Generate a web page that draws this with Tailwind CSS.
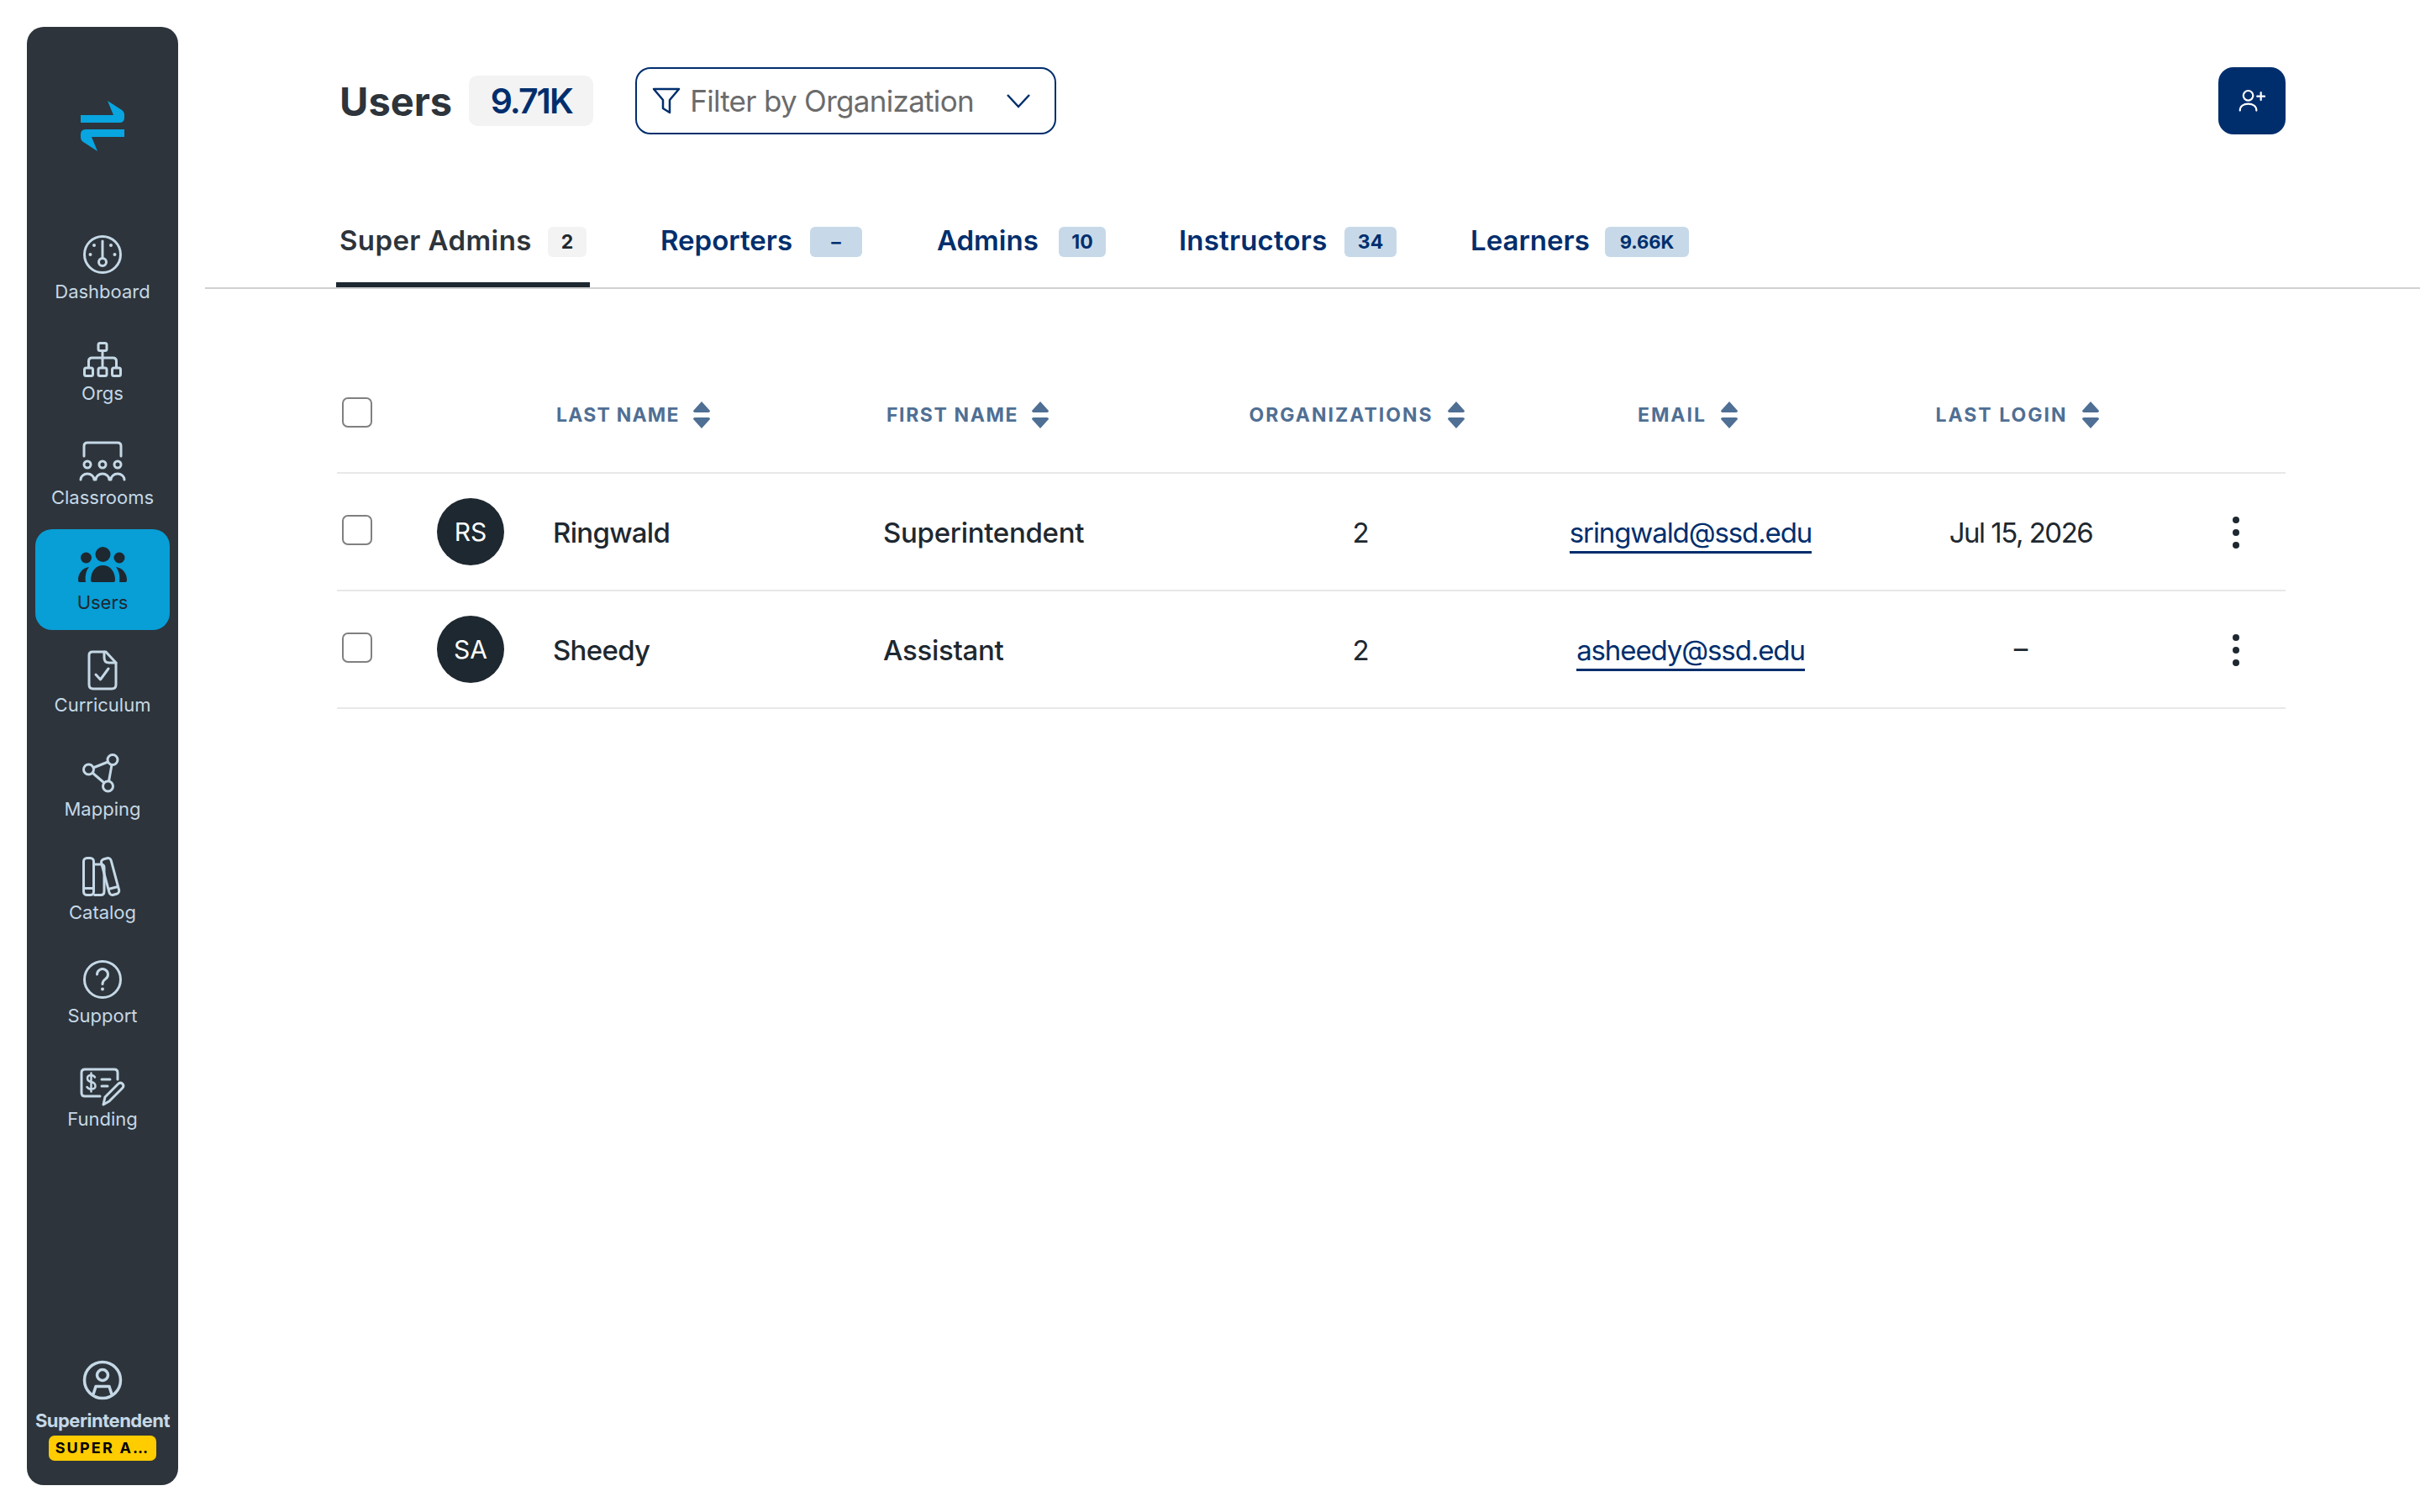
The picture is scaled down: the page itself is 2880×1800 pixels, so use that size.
<!DOCTYPE html>
<html lang="en">
<head>
  <meta charset="UTF-8" />
  <title>Users</title>
  <script src="https://cdn.jsdelivr.net/npm/@tailwindcss/browser@4"></script>
</head>
<body class="bg-white font-['Inter',sans-serif] text-[#1e2830]">
<div class="flex w-[2880px] h-[1800px] overflow-hidden">

  <!-- Sidebar -->
  <aside class="flex flex-col items-center shrink-0 w-[180px] h-[1736px] mt-[32px] ml-[32px] rounded-[20px] bg-[#2d343b] text-[#c5d8e6] text-[22px]">
    <svg class="mt-[88px] mb-[80px]" width="52" height="60" viewBox="0 0 52 60" fill="#08a5e0">
      <path d="M0 17H39L32 0L49 11Q52 13 52 17V20Q52 26 46 26H0Z" />
      <path d="M52 43H13L20 60L3 49Q0 47 0 43V40Q0 34 6 34H52Z" />
    </svg>

    <nav class="flex flex-col gap-[3.4px] w-[160px]">
      <a class="flex flex-col items-center h-[120px] pt-[20px]">
        <svg width="46" height="46" viewBox="0 0 46 46" fill="none" stroke="currentColor" stroke-width="3">
          <circle cx="23" cy="23" r="21.5" />
          <path d="M23 7V27" stroke-linecap="round" />
          <circle cx="23" cy="32" r="4.5" />
          <g fill="currentColor" stroke="none"><circle cx="13" cy="12" r="2" /><circle cx="33" cy="12" r="2" /><circle cx="8.500" cy="23" r="2" /><circle cx="37.500" cy="23" r="2" /></g>
        </svg>
        <span class="mt-[6px] leading-[30px]">Dashboard</span>
      </a>
      <a class="flex flex-col items-center h-[120px] pt-[24px]">
        <svg class="mb-[1px]" width="46" height="42" viewBox="0 0 46 42" fill="none" stroke="currentColor" stroke-width="3" stroke-linejoin="round">
          <rect x="18" y="1.500" width="10" height="9" rx="2" />
          <rect x="1.500" y="31" width="10" height="9.500" rx="2" />
          <rect x="18" y="31" width="10" height="9.500" rx="2" />
          <rect x="34.500" y="31" width="10" height="9.500" rx="2" />
          <path d="M23 10.500V31M6.500 31V23Q6.500 19 10.500 19H35.500Q39.500 19 39.500 23V31" />
        </svg>
        <span class="mt-[3px] leading-[30px]">Orgs</span>
      </a>
      <a class="flex flex-col items-center h-[120px] pt-[18px]">
        <svg width="58" height="48" viewBox="0 0 58 48" fill="none" stroke="currentColor" stroke-width="3" stroke-linecap="round">
          <path d="M7 18V6Q7 2 11 2H47Q51 2 51 6V18" />
          <circle cx="11" cy="28" r="4" /><circle cx="29" cy="28" r="4" /><circle cx="47" cy="28" r="4" />
          <path d="M3 46A8 7 0 0 1 19 46M21 46A8 7 0 0 1 37 46M39 46A8 7 0 0 1 55 46" />
        </svg>
        <span class="mt-[4px] leading-[30px]">Classrooms</span>
      </a>
      <a class="flex flex-col items-center h-[120px] pt-[21px] rounded-[20px] bg-[#089ed6] text-[#1e2830]">
        <svg width="58" height="42" viewBox="0 0 58 42" fill="currentColor">
          <circle cx="29.500" cy="9" r="9" /><circle cx="9.500" cy="13" r="6.500" /><circle cx="49" cy="13" r="6.500" />
          <path d="M15 40C15 29 21 22 29.500 22C38 22 44 29 44 40Q44 42 41 42H18Q15 42 15 40Z" />
          <path d="M1 42Q0 42 0 39C0 32 5 25 13 24C9 29 8 36 9 42Z" />
          <path d="M57 42Q58 42 58 39C58 32 53 25 45 24C49 29 50 36 49 42Z" />
        </svg>
        <span class="mt-[9px] leading-[30px]">Users</span>
      </a>
      <a class="flex flex-col items-center h-[120px] pt-[20px]">
        <svg width="36" height="48" viewBox="0 0 36 48" fill="none" stroke="currentColor" stroke-width="3" stroke-linejoin="round" stroke-linecap="round">
          <path d="M6 2H22L34 15V41Q34 46 29 46H7Q2 46 2 41V6Q2 2 6 2Z" />
          <path d="M20 2V9Q20 15 26 15H34" />
          <path d="M10 29L15.500 35L25 22" />
        </svg>
        <span class="mt-[2px] leading-[30px]">Curriculum</span>
      </a>
      <a class="flex flex-col items-center h-[120px] pt-[19px]">
        <svg class="mr-[2px]" width="48" height="48" viewBox="0 0 48 48" fill="none" stroke="currentColor" stroke-width="3">
          <circle cx="8.500" cy="20" r="6" /><circle cx="37" cy="8.500" r="6" /><circle cx="31.500" cy="40" r="6" />
          <path d="M14 18L31.500 11M13 24L27 36M36 14.500L32.500 34" />
        </svg>
        <span class="mt-[4px] leading-[30px]">Mapping</span>
      </a>
      <a class="flex flex-col items-center h-[120px] pt-[20px]">
        <svg width="48" height="48" viewBox="0 0 48 48" fill="none" stroke="currentColor" stroke-width="3" stroke-linejoin="round">
          <rect x="1.500" y="1.500" width="12" height="44" rx="4" />
          <path d="M13.500 9H22Q26 9 26 13V41Q26 45.500 22 45.500H13.500M1.500 37.500H13.500" />
          <g transform="rotate(-15 33 23)"><rect x="27" y="1.500" width="12" height="44" rx="4" /><path d="M27 37.500H39" /></g>
        </svg>
        <span class="mt-[3px] leading-[30px]">Catalog</span>
      </a>
      <a class="flex flex-col items-center h-[120px] pt-[19px]">
        <svg width="46" height="46" viewBox="0 0 46 46" fill="none" stroke="currentColor" stroke-width="3">
          <circle cx="23" cy="23" r="21.500" />
          <path d="M16.500 17A6.500 6.500 0 1 1 26.500 22.500C24.500 24 23 25 23 28.500" stroke-linecap="round" />
          <circle cx="23" cy="34.500" r="2" fill="currentColor" stroke="none" />
        </svg>
        <span class="mt-[5px] leading-[30px]">Support</span>
      </a>
      <a class="flex flex-col items-center h-[120px] pt-[24px]">
        <svg class="mb-[1px]" width="54" height="46" viewBox="0 0 54 46" fill="none" stroke="currentColor" stroke-width="3" stroke-linecap="round" stroke-linejoin="round">
          <path d="M24 34H6Q2 34 2 30V6Q2 2 6 2H41Q45 2 45 6V14" />
          <path d="M18 11.500Q16.500 9 13.500 9Q9 9 9 12.500Q9 16 13.500 17Q18.500 18 18.500 22Q18.500 25.500 13.500 25.500Q10 25.500 8.500 23M13.500 6.500V28.500" stroke-width="2.500" />
          <path d="M26 14H36M26 22H33" />
          <path d="M28 44L30 35L46 19Q49 17 51 19.500Q53 22 50.500 24.500L35 40Z" />
        </svg>
        <span class="mt-[-1px] leading-[30px]">Funding</span>
      </a>
    </nav>

    <div class="flex flex-col items-center mt-auto mb-[28px]">
      <svg width="48" height="48" viewBox="0 0 48 48" fill="none" stroke="currentColor" stroke-width="3.500">
        <circle cx="24" cy="24" r="21.500" />
        <circle cx="24" cy="18" r="6.500" />
        <path d="M13 41L16 31.500H32L35 41" stroke-linejoin="round" />
      </svg>
      <span class="mt-[9px] font-bold leading-[30px] tracking-[-0.5px]">Superintendent</span>
      <span class="mt-[3px] mb-[1px] w-[128px] h-[30px] rounded-[7px] bg-[#ffcc00] text-black text-[18px] font-bold leading-[30px] text-center tracking-[2.200px]">SUPER A…</span>
    </div>
  </aside>

  <!-- Main -->
  <main class="flex-1 min-w-0 ml-[32px]">
    <header class="flex items-center h-[80px] mt-[80px] pl-[160px] pr-[160px]">
      <h1 class="text-[47px] font-bold text-[#2d343b] leading-none">Users</h1>
      <span class="ml-[20px] w-[148px] h-[60px] rounded-[10px] bg-[#f3f3f3] text-[#002e6d] text-[41px] font-semibold leading-[60px] text-center tracking-[-2px]">9.71K</span>
      <button class="flex items-center ml-[50px] w-[501px] h-[80px] pl-[18px] rounded-[18px] border-[2.500px] border-[#002e6d] text-[#6b6b6b] text-[35px] tracking-[-0.7px]">
        <svg width="34" height="32" viewBox="0 0 34 32" fill="none" stroke="#002e6d" stroke-width="2.500" stroke-linejoin="round"><path d="M2 2H32L21 15V30L13 25V15Z" /></svg>
        <span class="ml-[11px]">Filter by Organization</span>
        <svg class="ml-auto mr-[28px]" width="30" height="18" viewBox="0 0 30 18" fill="none" stroke="#002e6d" stroke-width="2.500"><path d="M2 2L15 16L28 2" /></svg>
      </button>
      <button class="flex items-center justify-center ml-auto w-[80px] h-[80px] rounded-[18px] bg-[#002e6d]">
        <svg width="32" height="30" viewBox="0 0 36 32" fill="none" stroke="#fff" stroke-width="2.500" stroke-linecap="round">
          <circle cx="13" cy="9" r="6.500" />
          <path d="M2 29C2 23 7 20 13 20C19 20 24 23 24 29" />
          <path d="M30 5V15M25 10H35" />
        </svg>
      </button>
    </header>

    <!-- Tabs -->
    <div class="flex items-end h-[184px] pl-[156px] border-b-[2px] border-[#d0d0d0] text-[#002e6d] text-[33px] font-semibold whitespace-nowrap">
      <a class="flex items-start h-[72px] w-[302px] pl-[4px] border-b-[6px] border-[#1e2830] text-[#2d343b]">
        <span class="w-[228px] leading-[33px] tracking-[0.4px]">Super Admins</span>
        <span class="ml-[20px] w-[46px] h-[36px] rounded-[6px] bg-[#f3f3f3] text-[#1e2830] text-[23px] font-bold leading-[36px] text-center">2</span>
      </a>
      <a class="flex items-start h-[72px] ml-[84px]">
        <span class="w-[158px] leading-[33px]">Reporters</span>
        <span class="ml-[20px] w-[62px] h-[36px] rounded-[6px] bg-[#c7d9e8] text-[23px] leading-[36px] text-center">–</span>
      </a>
      <a class="flex items-start h-[72px] ml-[89px]">
        <span class="w-[125px] leading-[33px]">Admins</span>
        <span class="ml-[20px] w-[56px] h-[36px] rounded-[6px] bg-[#c7d9e8] text-[23px] font-bold leading-[36px] text-center">10</span>
      </a>
      <a class="flex items-start h-[72px] ml-[87px]">
        <span class="w-[177px] leading-[33px] tracking-[0.2px]">Instructors</span>
        <span class="ml-[20px] w-[62px] h-[36px] rounded-[6px] bg-[#c7d9e8] text-[23px] font-bold leading-[36px] text-center">34</span>
      </a>
      <a class="flex items-start h-[72px] ml-[88px]">
        <span class="w-[140px] leading-[33px]">Learners</span>
        <span class="ml-[20px] w-[100px] h-[36px] rounded-[6px] bg-[#c7d9e8] text-[22px] font-bold leading-[36px] text-center">9.66K</span>
      </a>
    </div>

    <!-- Table -->
    <div class="ml-[157px] mr-[160px] text-[33px]">
      <div class="grid grid-cols-[115px_142px_393px_379px_376px_408px_382px_124px] items-center h-[220px] border-b-[2px] border-[#e8e8e8] pt-[80px] text-[#4f6f94] text-[23px] font-bold tracking-[2px]">
        <span class="w-[36px] h-[36px] ml-[6px] mt-[-4px] rounded-[7px] border-[2px] border-[#808080]"></span>
        <span></span>
        <span class="flex items-center gap-[15px] pl-[4px] pt-[2px] tracking-[1.2px]">LAST NAME
          <svg width="22" height="32" viewBox="0 0 22 32" fill="currentColor"><path d="M11 0L21 11Q21 13 19 13H3Q1 13 1 11Z" /><path d="M11 32L21 21Q21 19 19 19H3Q1 19 1 21Z" /></svg>
        </span>
        <span class="flex items-center gap-[15px] pl-[4px] pt-[2px] tracking-[1.6px]">FIRST NAME
          <svg width="22" height="32" viewBox="0 0 22 32" fill="currentColor"><path d="M11 0L21 11Q21 13 19 13H3Q1 13 1 11Z" /><path d="M11 32L21 21Q21 19 19 19H3Q1 19 1 21Z" /></svg>
        </span>
        <span class="flex items-center justify-center gap-[16px] pr-[6px] pt-[2px]">ORGANIZATIONS
          <svg width="22" height="32" viewBox="0 0 22 32" fill="currentColor"><path d="M11 0L21 11Q21 13 19 13H3Q1 13 1 11Z" /><path d="M11 32L21 21Q21 19 19 19H3Q1 19 1 21Z" /></svg>
        </span>
        <span class="flex items-center justify-center gap-[16px] pr-[2px] pt-[2px]">EMAIL
          <svg width="22" height="32" viewBox="0 0 22 32" fill="currentColor"><path d="M11 0L21 11Q21 13 19 13H3Q1 13 1 11Z" /><path d="M11 32L21 21Q21 19 19 19H3Q1 19 1 21Z" /></svg>
        </span>
        <span class="flex items-center justify-center gap-[16px] pr-[8px] pt-[2px]">LAST LOGIN
          <svg width="22" height="32" viewBox="0 0 22 32" fill="currentColor"><path d="M11 0L21 11Q21 13 19 13H3Q1 13 1 11Z" /><path d="M11 32L21 21Q21 19 19 19H3Q1 19 1 21Z" /></svg>
        </span>
        <span></span>
      </div>

      <div class="grid grid-cols-[115px_142px_393px_379px_376px_408px_382px_124px] items-center h-[140px] border-b-[2px] border-[#e8e8e8]">
        <span class="w-[36px] h-[36px] ml-[6px] mt-[-4px] rounded-[7px] border-[2px] border-[#808080]"></span>
        <span class="flex items-center justify-center w-[80px] h-[80px] ml-[4px] rounded-full bg-[#1e2830] text-white text-[30px]">RS</span>
        <span class="pt-[3px] font-medium tracking-[-0.7px]">Ringwald</span>
        <span class="pt-[3px] font-medium tracking-[-0.3px]">Superintendent</span>
        <span class="pt-[3px] text-center pl-[3px]">2</span>
        <span class="pt-[3px] pl-[4px] text-center"><a class="inline-block border-b-[3px] border-[#002e6d] leading-[44px] text-[#002e6d] tracking-[-1.100px]">sringwald@ssd.edu</a></span>
        <span class="pt-[3px] text-center tracking-[-1.500px]">Jul 15, 2026</span>
        <span class="flex flex-col items-center gap-[7px] pl-[6px] pt-[2px]"><i class="w-[8px] h-[8px] rounded-full bg-[#1e2830]"></i><i class="w-[8px] h-[8px] rounded-full bg-[#1e2830]"></i><i class="w-[8px] h-[8px] rounded-full bg-[#1e2830]"></i></span>
      </div>

      <div class="grid grid-cols-[115px_142px_393px_379px_376px_408px_382px_124px] items-center h-[140px] border-b-[2px] border-[#e8e8e8]">
        <span class="w-[36px] h-[36px] ml-[6px] mt-[-4px] rounded-[7px] border-[2px] border-[#808080]"></span>
        <span class="flex items-center justify-center w-[80px] h-[80px] ml-[4px] rounded-full bg-[#1e2830] text-white text-[30px]">SA</span>
        <span class="pt-[3px] font-medium tracking-[-0.7px]">Sheedy</span>
        <span class="pt-[3px] font-medium tracking-[-0.3px]">Assistant</span>
        <span class="pt-[3px] text-center pl-[3px]">2</span>
        <span class="pt-[3px] pl-[4px] text-center"><a class="inline-block border-b-[3px] border-[#002e6d] leading-[44px] text-[#002e6d] tracking-[-1.100px]">asheedy@ssd.edu</a></span>
        <span class="text-center">–</span>
        <span class="flex flex-col items-center gap-[7px] pl-[6px] pt-[2px]"><i class="w-[8px] h-[8px] rounded-full bg-[#1e2830]"></i><i class="w-[8px] h-[8px] rounded-full bg-[#1e2830]"></i><i class="w-[8px] h-[8px] rounded-full bg-[#1e2830]"></i></span>
      </div>
    </div>
  </main>
</div>
</body>
</html>
